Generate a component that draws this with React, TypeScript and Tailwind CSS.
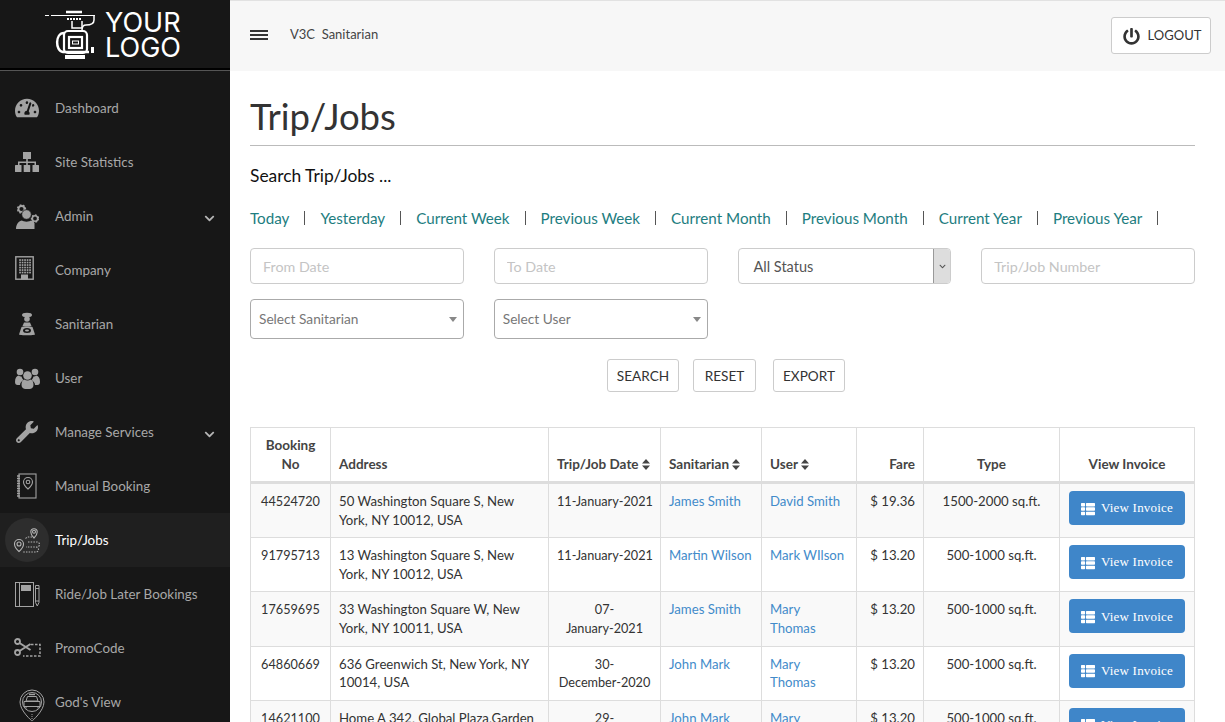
import type { ReactNode } from "react";
import { FaChevronDown, FaPowerOff, FaTachometerAlt, FaThList, FaWrench } from "react-icons/fa";

function Gear({ cx, cy, r }: { cx: number; cy: number; r: number }) {
    return (
        <g>
            <circle cx={cx} cy={cy} r={r} fill="none" stroke="#a3a3a3" strokeWidth={r * 0.6} />
            <circle cx={cx} cy={cy} r={r * 1.3} fill="none" stroke="#a3a3a3" strokeWidth={r * 0.5} strokeDasharray="1.800 1.400" />
        </g>
    );
}

function SiteIcon() {
    return (
        <svg width="24" height="20" viewBox="0 0 24 20" fill="#a3a3a3">
            <rect x="8" y="0" width="8" height="7" />
            <rect x="0" y="13" width="6.500" height="7" rx="0.500" />
            <rect x="8.700" y="13" width="6.500" height="7" rx="0.500" />
            <rect x="17.500" y="13" width="6.500" height="7" rx="0.500" />
            <path d="M11.200 7h1.600v2.500H21V13h-1.500v-2H12.800v2h-1.600v-2H4.500v2H3V9.500h8.200z" />
        </svg>
    );
}

function AdminIcon() {
    return (
        <svg width="24" height="25" viewBox="0 0 24 25">
            <Gear cx={6.500} cy={5} r={3} />
            <Gear cx={20} cy={14.500} r={2.700} />
            <circle cx="11.500" cy="10.500" r="4.800" fill="#a3a3a3" stroke="#171717" strokeWidth="0.800" />
            <path d="M1 25c0-5 3-8 6-8.500 1.500 1.500 7.500 1.500 9 0 2 .5 3 1.500 3.500 2.500V25z" fill="#a3a3a3" />
        </svg>
    );
}

function CompanyIcon() {
    const windows: ReactNode[] = [];
    for (let r = 0; r < 6; r++) {
        for (let c = 0; c < 5; c++) {
            windows.push(<rect key={r + "-" + c} x={4.200 + c * 2.500} y={3.200 + r * 2.500} width="1.700" height="1.700" fill="#a3a3a3" />);
        }
    }
    return (
        <svg width="19" height="24" viewBox="0 0 19 24" className="-ml-[5px] -mt-[5px]">
            <rect x="0.800" y="0.800" width="17.400" height="22.400" fill="none" stroke="#a3a3a3" strokeWidth="1.400" />
            {windows}
            <rect x="6" y="18.500" width="7" height="5" fill="#a3a3a3" />
        </svg>
    );
}

function SanitarianIcon() {
    return (
        <svg width="20" height="24" viewBox="0 0 20 24" fill="#a3a3a3">
            <ellipse cx="10" cy="3" rx="5" ry="2.200" />
            <circle cx="10" cy="7" r="2.800" />
            <path d="M7 10.500h6l1.500 3.500H5.500z" />
            <path d="M4.500 15c1-1 10-1 11 0l2.500 7.500c-1 1-15 1-16 0z" />
            <ellipse cx="10" cy="18.500" rx="4" ry="2.500" fill="#171717" />
            <ellipse cx="10" cy="18.500" rx="2" ry="1.100" />
        </svg>
    );
}

function UsersIcon() {
    return (
        <svg width="25" height="21" viewBox="0 0 25 21" fill="#a3a3a3">
            <circle cx="5" cy="4" r="3.300" />
            <circle cx="20" cy="4" r="3.300" />
            <path d="M0 14c0-4 1.500-6 3.500-6.500 1 .8 2 1 3 1 .5 2 1.500 3 2 3.500-2 1-3.500 3-3.500 5H2.500C1 17 0 16 0 14zM25 14c0-4-1.500-6-3.500-6.500-1 .8-2 1-3 1-.5 2-1.500 3-2 3.500 2 1 3.500 3 3.500 5h2.500c1.500 0 2.500-1 2.500-3z" />
            <circle cx="12.500" cy="7.500" r="4.300" />
            <path d="M6.500 17c0-3 1-5 2.800-5.500 1.800 1.400 4.600 1.400 6.400 0 1.800.5 2.800 2.500 2.800 5.500 0 2.500-2 4-4 4h-4c-2 0-4-1.500-4-4z" />
        </svg>
    );
}

function ManualBookingIcon() {
    return (
        <svg width="22" height="26" viewBox="0 0 22 26" fill="none" stroke="#a3a3a3" strokeWidth="1.100">
            <rect x="3" y="1" width="17" height="24" />
            <path d="M1 3h3M1 5.500h3M1 8h3M1 10.500h3M1 13h3M1 15.500h3M1 18h3M1 20.500h3M1 23h3" strokeWidth="1.300" />
            <path d="M12 16s-4.500-4-4.500-7a4.500 4.500 0 0 1 9 0c0 3-4.500 7-4.500 7z" />
            <circle cx="12" cy="9" r="1.800" />
        </svg>
    );
}

function TripIcon() {
    return (
        <svg width="26" height="26" viewBox="0 0 26 26" fill="none" stroke="#b5b5b5" strokeWidth="1.100">
            <path d="M5 24.500s-4.500-4-4.500-7.500a4.500 4.500 0 0 1 9 0C9.500 20.500 5 24.500 5 24.500z" />
            <circle cx="5" cy="17" r="2" />
            <path d="M20 11s-3.200-3-3.200-6a3.200 3.200 0 0 1 6.400 0C23.200 8 20 11 20 11z" />
            <circle cx="20" cy="4.800" r="1.500" />
            <path d="M18 10h-4a2.500 2.500 0 0 0-2.500 2.500M14 15h9a2.500 2.500 0 0 1 0 5H12M22 20a2.500 2.500 0 0 1 0 5H8" strokeDasharray="1.500 1.200" />
        </svg>
    );
}

function LaterIcon() {
    return (
        <svg width="25" height="25" viewBox="0 0 25 25" fill="none" stroke="#a3a3a3" strokeWidth="1">
            <rect x="0.500" y="0.500" width="18" height="24" />
            <path d="M4.500 0.500v24" />
            <rect x="6.500" y="3.500" width="9" height="5" fill="#a3a3a3" />
            <path d="M20.500 3.500h3.500v17l-1.750 3.500-1.750-3.500zM20.500 6.500h3.500M20.500 19h3.500" />
        </svg>
    );
}

function PromoIcon() {
    return (
        <svg width="27" height="20" viewBox="0 0 27 20" fill="none" stroke="#a3a3a3" strokeWidth="1.800">
            <circle cx="3.500" cy="3.500" r="2.500" />
            <circle cx="3.500" cy="14.500" r="2.500" />
            <path d="M5.500 5l11 7M5.500 13l11-7" strokeWidth="2" />
            <path d="M17 6.500h9v11.500H9" strokeDasharray="2.500 1.500" strokeWidth="1.500" />
        </svg>
    );
}

function GodIcon() {
    return (
        <svg width="26" height="33" viewBox="0 0 26 33" fill="none" stroke="#a3a3a3" strokeWidth="1" className="ml-[10px] mt-[6px]">
            <path d="M13 32S1 22 1 13a12 12 0 0 1 24 0c0 9-12 19-12 19z" />
            <circle cx="13" cy="13" r="9.500" />
            <path d="M7 12l1.500-4.500h9L19 12zM5 12.500h16v5H5zM7 17.500v2M19 17.500v2" fill="#171717" />
            <path d="M10 5.500h6" strokeWidth="1.400" />
            <path d="M13 25v5" strokeDasharray="1 1" />
        </svg>
    );
}

const navItems: { label: string; icon: ReactNode; chevron?: boolean; active?: boolean }[] = [
    { label: "Dashboard", icon: <FaTachometerAlt size={24} color="#a3a3a3" /> },
    { label: "Site Statistics", icon: <SiteIcon /> },
    { label: "Admin", icon: <AdminIcon />, chevron: true },
    { label: "Company", icon: <CompanyIcon /> },
    { label: "Sanitarian", icon: <SanitarianIcon /> },
    { label: "User", icon: <UsersIcon /> },
    { label: "Manage Services", icon: <FaWrench size={22} color="#a3a3a3" />, chevron: true },
    { label: "Manual Booking", icon: <ManualBookingIcon /> },
    { label: "Trip/Jobs", icon: <TripIcon />, active: true },
    { label: "Ride/Job Later Bookings", icon: <LaterIcon /> },
    { label: "PromoCode", icon: <PromoIcon /> },
    { label: "God's View", icon: <GodIcon /> },
];

const quickLinks = ["Today", "Yesterday", "Current Week", "Previous Week", "Current Month", "Previous Month", "Current Year", "Previous Year"];

const rows: { no: string; address: ReactNode; date: ReactNode; sanitarian: string; user: ReactNode; fare: string; type: string }[] = [
    { no: "44524720", address: <>50 Washington Square S, New<br />York, NY 10012, USA</>, date: "11-January-2021", sanitarian: "James Smith", user: "David Smith", fare: "$ 19.36", type: "1500-2000 sq.ft." },
    { no: "91795713", address: <>13 Washington Square S, New<br />York, NY 10012, USA</>, date: "11-January-2021", sanitarian: "Martin Wilson", user: "Mark WIlson", fare: "$ 13.20", type: "500-1000 sq.ft." },
    { no: "17659695", address: <>33 Washington Square W, New<br />York, NY 10011, USA</>, date: <>07-<br />January-2021</>, sanitarian: "James Smith", user: <>Mary<br />Thomas</>, fare: "$ 13.20", type: "500-1000 sq.ft." },
    { no: "64860669", address: <>636 Greenwich St, New York, NY<br />10014, USA</>, date: <>30-<br />December-2020</>, sanitarian: "John Mark", user: <>Mary<br />Thomas</>, fare: "$ 13.20", type: "500-1000 sq.ft." },
    { no: "14621100", address: <>Home A 342, Global Plaza,Garden<br />City, NY 11530, USA</>, date: <>29-<br />December-2020</>, sanitarian: "John Mark", user: <>Mary<br />Thomas</>, fare: "$ 13.20", type: "500-1000 sq.ft." },
];

function SortIcon() {
    return (
        <svg className="inline-block ml-[3px] mb-[1px]" width="8" height="11" viewBox="0 0 8 11" fill="#444">
            <path d="M4 0l4 4.500H0zM4 11L0 6.500h8z" />
        </svg>
    );
}

function Sidebar() {
    return (
        <aside className="w-[230px] shrink-0 bg-[#171717] overflow-hidden">
            <div className="h-[71px] flex items-center justify-center gap-[10px] border-b border-[#555] shadow-[inset_0_-2px_0_#000] pr-[4px]">
                <svg width="50" height="50" viewBox="0 0 50 50" fill="none" stroke="#fff">
                    <path d="M0 5.500h4M6 5.500h44" strokeWidth="1" />
                    <path d="M21 2h16" strokeWidth="2.500" />
                    <path d="M22 9h15" strokeWidth="2" strokeDasharray="2 1" />
                    <path d="M27 11v7h10v-7" strokeWidth="1.500" />
                    <path d="M49 6v4c0 5-5 5-8 5-3 0-4 2-4 5" strokeWidth="1.500" />
                    <rect x="19" y="21" width="23" height="22" rx="4" strokeWidth="2.200" />
                    <rect x="24" y="27" width="13" height="11" strokeWidth="2.200" />
                    <rect x="27.500" y="31" width="6" height="3" strokeWidth="1" />
                    <path d="M19 23C10 23 10 41 18 42h26" strokeWidth="2.500" />
                    <path d="M46 37h3v6h-3z" fill="#fff" stroke="none" />
                    <path d="M20 45h20v4H20z" fill="#fff" stroke="none" />
                </svg>
                <div className="font-['Inter',sans-serif] text-[27px] leading-[25px] text-white">
                    YOUR<br />LOGO
                </div>
            </div>
            <nav className="pt-[10px]">
                {navItems.map((item) => (
                    <div key={item.label} className={"h-[54px] flex items-center pl-[5px] " + (item.active ? "bg-[#1f1f1f]" : "")}>
                        <div className={"w-[44px] h-[44px] flex items-center justify-center rounded-full " + (item.active ? "bg-[#2d2d2d]" : "")}>
                            {item.icon}
                        </div>
                        <span className={"ml-[6px] text-[13.4px] " + (item.active ? "text-white" : "text-[#a8a8a8]")}>{item.label}</span>
                        {item.chevron && <FaChevronDown size={11} color="#b5b5b5" className="ml-auto mr-[15px] mt-[5px]" />}
                    </div>
                ))}
            </nav>
        </aside>
    );
}

function Topbar() {
    return (
        <header className="h-[71px] shrink-0 bg-[#f7f7f7] border-t border-[#e2e2e2] flex items-center pl-[20px] pr-[14px] pb-[1px]">
            <div className="w-[18px] flex flex-col gap-[2px] mb-[2px]">
                <span className="h-[2px] bg-[#333]" />
                <span className="h-[2px] bg-[#333]" />
                <span className="h-[2px] bg-[#333]" />
            </div>
            <span className="ml-[22px] mb-[2px] text-[13px] text-[#444] whitespace-pre">V3C  Sanitarian</span>
            <button className="ml-auto w-[100px] h-[37px] pl-[2px] pt-[1px] flex items-center justify-center gap-[8px] bg-white border border-[#ccc] rounded-[3px] text-[13px] text-[#333]">
                <FaPowerOff size={17} color="#333" />
                LOGOUT
            </button>
        </header>
    );
}

function Filters() {
    return (
        <>
            <div className="grid grid-cols-4 gap-x-[30px]">
                <input placeholder="From Date" className="h-[36px] min-w-0 px-[12px] border border-[#ccc] rounded-[4px] text-[14.3px] placeholder:text-[#c4c4c4] bg-white" />
                <input placeholder="To Date" className="h-[36px] min-w-0 px-[12px] border border-[#ccc] rounded-[4px] text-[14.3px] placeholder:text-[#c4c4c4] bg-white" />
                <div className="h-[36px] flex items-center justify-between border border-[#ccc] rounded-[4px] text-[14.5px] text-[#555] bg-white">
                    <span className="pl-[15px] pt-[1px]">All Status</span>
                    <span className="w-[17px] h-[34px] flex items-center justify-center bg-[#ddd] border-l border-[#999] rounded-r-[3px]">
                        <FaChevronDown size={7} color="#555" />
                    </span>
                </div>
                <input placeholder="Trip/Job Number" className="h-[36px] min-w-0 px-[12px] border border-[#ccc] rounded-[4px] text-[14.3px] placeholder:text-[#c4c4c4] bg-white" />
            </div>
            <div className="grid grid-cols-4 gap-x-[30px] mt-[15px]">
                {["Select Sanitarian", "Select User"].map((label) => (
                    <div key={label} className="h-[40px] flex items-center justify-between pl-[8px] pr-[6px] border border-[#aaa] rounded-[4px] text-[13.7px] text-[#777]">
                        {label}
                        <span className="w-0 h-0 border-x-[4px] border-x-transparent border-t-[5px] border-t-[#888]" />
                    </div>
                ))}
            </div>
            <div className="flex justify-center pl-[7px] mt-[20px] text-[13.6px] text-[#333]">
                <button className="w-[72px] h-[33px] pt-[1px] border border-[#ccc] rounded-[3px] bg-white">SEARCH</button>
                <button className="w-[63px] h-[33px] pt-[1px] ml-[14px] border border-[#ccc] rounded-[3px] bg-white">RESET</button>
                <button className="w-[72px] h-[33px] pt-[1px] ml-[17px] border border-[#ccc] rounded-[3px] bg-white">EXPORT</button>
            </div>
        </>
    );
}

function JobsTable() {
    return (
        <table className="w-[944px] table-fixed border-collapse mt-[35px] text-[13.2px] leading-[18.57px] text-[#333]">
            <colgroup>
                <col className="w-[80px]" />
                <col className="w-[218px]" />
                <col className="w-[112px]" />
                <col className="w-[101px]" />
                <col className="w-[95px]" />
                <col className="w-[67px]" />
                <col className="w-[136px]" />
                <col className="w-[135px]" />
            </colgroup>
            <thead>
                <tr className="font-bold text-[13.5px] text-[#444] align-bottom">
                    <th className="border border-[#ddd] border-b-[3px] p-[8px] text-center">Booking<br />No</th>
                    <th className="border border-[#ddd] border-b-[3px] p-[8px] text-left">Address</th>
                    <th className="border border-[#ddd] border-b-[3px] p-[8px] text-left whitespace-nowrap">Trip/Job Date<SortIcon /></th>
                    <th className="border border-[#ddd] border-b-[3px] p-[8px] text-left whitespace-nowrap">Sanitarian<SortIcon /></th>
                    <th className="border border-[#ddd] border-b-[3px] p-[8px] text-left whitespace-nowrap">User<SortIcon /></th>
                    <th className="border border-[#ddd] border-b-[3px] p-[8px] text-right">Fare</th>
                    <th className="border border-[#ddd] border-b-[3px] p-[8px] text-center">Type</th>
                    <th className="border border-[#ddd] border-b-[3px] p-[8px] text-center">View Invoice</th>
                </tr>
            </thead>
            <tbody>
                {rows.map((row, i) => (
                    <tr key={row.no} className={"align-top " + (i % 2 === 0 ? "bg-[#f9f9f9]" : "bg-white")}>
                        <td className="border border-[#ddd] p-[8px] text-center text-[12.7px]">{row.no}</td>
                        <td className="border border-[#ddd] p-[8px] whitespace-nowrap">{row.address}</td>
                        <td className="border border-[#ddd] p-[8px] text-center text-[12.7px] whitespace-nowrap">{row.date}</td>
                        <td className="border border-[#ddd] p-[8px] text-[#428bca] whitespace-nowrap">{row.sanitarian}</td>
                        <td className="border border-[#ddd] p-[8px] text-[#428bca] whitespace-nowrap">{row.user}</td>
                        <td className="border border-[#ddd] p-[8px] text-right whitespace-nowrap">{row.fare}</td>
                        <td className="border border-[#ddd] p-[8px] text-center whitespace-nowrap">{row.type}</td>
                        <td className="border border-[#ddd] p-[8px] pt-[7px]">
                            <button className="w-[116px] h-[34px] pt-[1px] mx-auto flex items-center justify-center gap-[6px] bg-[#3f86c9] rounded-[4px] text-white text-[13px] tracking-[0.2px] font-['Liberation_Serif',serif]">
                                <FaThList size={14} color="#fff" />
                                View Invoice
                            </button>
                        </td>
                    </tr>
                ))}
            </tbody>
        </table>
    );
}

export default function App() {
    return (
        <div className="h-screen flex overflow-hidden bg-white font-['Lato',sans-serif]">
            <Sidebar />
            <main className="flex-1 min-w-0 flex flex-col overflow-hidden">
                <Topbar />
                <div className="pl-[20px] pr-[30px]">
                    <div className="h-[75px] pt-[23px] border-b border-[#bbb]">
                        <h1 className="text-[36.5px] leading-[44px] text-[#333]">Trip/Jobs</h1>
                    </div>
                    <div className="h-[60px] flex items-center text-[17.4px] text-[#111]">Search Trip/Jobs ...</div>
                    <div className="flex h-[24px] items-center text-[15.2px] text-[#1d7d80]">
                        {quickLinks.map((link) => (
                            <span key={link} className="flex items-center whitespace-nowrap">
                                {link}
                                <span className="mx-[15px] w-[1px] h-[14px] bg-[#555]" />
                            </span>
                        ))}
                    </div>
                    <div className="mt-[18px]">
                        <Filters />
                    </div>
                    <JobsTable />
                </div>
            </main>
        </div>
    );
}
